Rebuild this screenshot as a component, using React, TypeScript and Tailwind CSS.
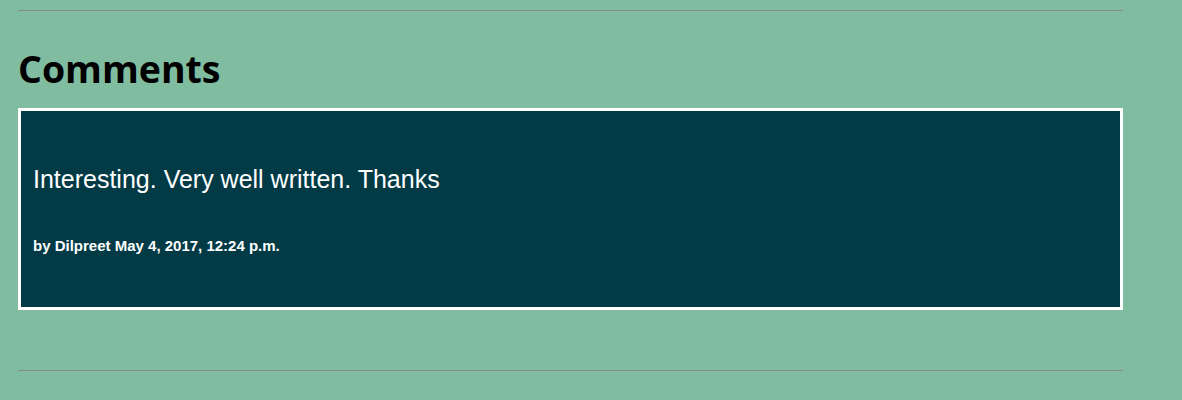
export default function App() {
  return (
    <div className="min-h-[400px] w-full bg-[#80bc9f] pl-[18px] pt-[10px]">
      <div className="w-[1105px]">
        <div className="h-px bg-[#8a8a8a]" />
        <h2 className="mt-[39px] mb-[21px] text-[37.5px] font-bold leading-[37px] text-black" style={{ fontFamily: '"Open Sans", sans-serif' }}>
          Comments
        </h2>
        <div className="h-[202px] border-[3px] border-white bg-[#023a46] px-[12px] pt-[54px]" style={{ fontFamily: '"Liberation Sans", Arial, sans-serif' }}>
          <p className="text-[25px] leading-[28px] text-white">Interesting. Very well written. Thanks</p>
          <p className="mt-[44px] text-[15px] font-bold leading-[17px] text-white">by Dilpreet May 4, 2017, 12:24 p.m.</p>
        </div>
        <div className="mt-[60px] h-px bg-[#8a8a8a]" />
      </div>
    </div>
  );
}
